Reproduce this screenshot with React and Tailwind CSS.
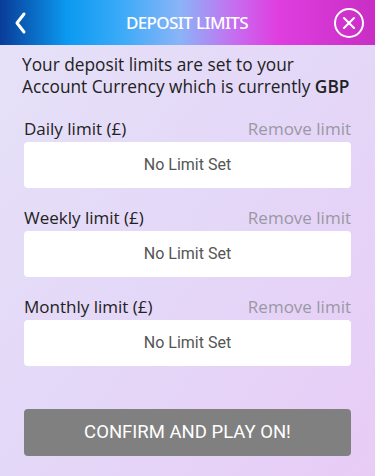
import { X } from 'lucide-react';

const limits = ['Daily', 'Weekly', 'Monthly'];

export default function App() {
    return (
        <div className="w-[375px] h-[476px] overflow-hidden bg-gradient-to-br from-[#e6e2f8] via-[#e4d8f8] to-[#e8ccf6] font-['Open_Sans',sans-serif]">
            {/* Header */}
            <div className="h-[45px] flex items-center justify-between px-[10px] bg-[linear-gradient(90deg,#093c98_0%,#0b9af0_18%,#3aaaf8_32%,#8ab4f8_48%,#c470f0_62%,#e03ee0_74%,#c82ec4_100%)]">
                <svg width="18" height="24" viewBox="0 0 18 24" className="ml-[2px]">
                    <path d="M12 3 L5 12 L12 21" fill="none" stroke="white" strokeWidth="3" strokeLinecap="round" strokeLinejoin="round" />
                </svg>
                <span className="text-white text-[17px] tracking-[-0.6px] font-['Noto_Sans',sans-serif] font-medium ml-[10px]">DEPOSIT LIMITS</span>
                <div className="w-[30px] h-[30px] rounded-full border-[2.5px] border-white flex items-center justify-center mr-[1px]">
                    <X className="text-white" size={20} strokeWidth={2.5} />
                </div>
            </div>

            <div className="px-[24px]">
                <p className="mt-[9px] text-[17.3px] leading-[22px] text-[#222] -ml-[2px]">
                    Your deposit limits are set to your Account Currency which is currently <span className="font-semibold">GBP</span>
                </p>

                <div className="mt-[18px] flex flex-col gap-[17px]">
                    {limits.map((name) => (
                        <div key={name}>
                            <div className="flex justify-between items-center h-[26px] text-[17px]">
                                <span className="text-[#222]">{name} limit (£)</span>
                                <span className="text-[#9a98a4]">Remove limit</span>
                            </div>
                            <div className="h-[46px] bg-white rounded-[4px] flex items-center justify-center text-[16px] text-[#555] font-['Roboto',sans-serif]">
                                No Limit Set
                            </div>
                        </div>
                    ))}
                </div>

                <button className="mt-[43px] w-full h-[47px] rounded-[4px] bg-[#808080] text-white text-[18.5px] font-['Roboto',sans-serif]">
                    CONFIRM AND PLAY ON!
                </button>
            </div>
        </div>
    );
}
